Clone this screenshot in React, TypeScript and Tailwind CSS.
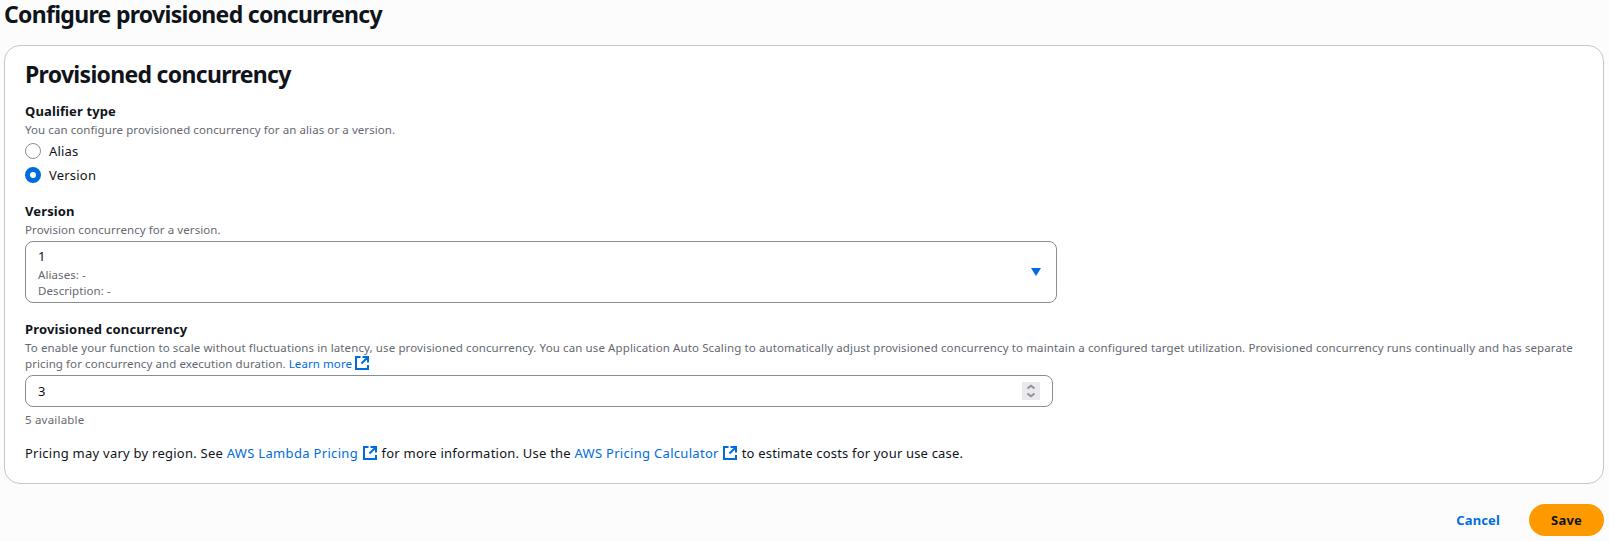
import React from "react";

const Ext = ({ className = "" }: { className?: string }) => (
  <svg className={"inline-block h-4 w-4 shrink-0 " + className} viewBox="0 0 16 16" fill="none" stroke="#006ce0" strokeWidth="2">
    <path d="M6.5 2H2v12h12v-4M7.5 8.5l6-6M8.5 2H14v5.5" />
  </svg>
);

const label = "block text-[13px] leading-5 font-bold tracking-[0.13px]";
const hint = "text-[11.5px] leading-4 text-[#656871] tracking-[0.08px]";

export default function App() {
  return (
    <div className="h-[541px] overflow-hidden bg-[#fcfcfd] pl-1 pr-[5px] font-['Noto_Sans',sans-serif] text-[13px] leading-5 tracking-[0.2px] text-[#0f141a]">
      <h1 className="h-[45px] text-[23px] leading-[29px] font-bold tracking-[-0.7px]">Configure provisioned concurrency</h1>
      <section className="h-[439px] rounded-2xl border border-[#c6c6cd] bg-white px-5 pt-[14px]">
        <h2 className="text-[23px] leading-[29px] font-bold tracking-[-0.7px]">Provisioned concurrency</h2>
        <div className="mt-3"><span className={label}>Qualifier type</span></div>
        <p className={hint + " mt-px"}><span>You can configure provisioned concurrency for an alias or a version.</span></p>
        <div className="mt-[3px] flex flex-col gap-1">
          <label className="flex items-center gap-2">
            <span className="h-4 w-4 rounded-full border border-[#8c8c94]" />
            <span>Alias</span>
          </label>
          <label className="flex items-center gap-2">
            <span className="h-4 w-4 rounded-full border-5 border-[#006ce0]" />
            <span>Version</span>
          </label>
        </div>
        <div className="mt-4"><span className={label}>Version</span></div>
        <p className={hint + " mt-px"}><span>Provision concurrency for a version.</span></p>
        <div className="mt-[3px] flex h-[62px] w-[1032px] items-center justify-between rounded-lg border border-[#8c8c94] pr-[15px] pl-3">
          <div className="pt-px">
            <div className="-mt-px mb-px"><span>1</span></div>
            <div className={hint}>Aliases: -</div>
            <div className={hint}>Description: -</div>
          </div>
          <svg className="h-2 w-[10px]" viewBox="0 0 10 8" fill="#006ce0"><path d="M0 0h10L5 8z" /></svg>
        </div>
        <div className="mt-4"><span className={label}>Provisioned concurrency</span></div>
        <p className={hint + " mt-px"}><span className="tracking-[0.115px] whitespace-nowrap">To enable your function to scale without fluctuations in latency, use provisioned concurrency. You can use Application Auto Scaling to automatically adjust provisioned concurrency to maintain a configured target utilization. Provisioned concurrency runs continually and has separate</span></p>
        <p className={hint + " flex"}><span>pricing for concurrency and execution duration.</span><a className="ml-[3px] text-[#006ce0]">Learn more</a><Ext className="-mt-px ml-[2px]" /></p>
        <div className="mt-[3px] flex h-8 w-[1028px] items-center justify-between rounded-lg border border-[#8c8c94] pr-3 pl-3">
          <span>3</span>
          <span className="flex h-[18px] w-[18px] items-center justify-center bg-[#e9e9ed]">
            <svg className="h-[18px] w-[18px]" viewBox="0 0 18 18" fill="none" stroke="#8f8f9d" strokeWidth="2"><path d="M5.5 6.5L9 3.8l3.5 2.7M5.5 11.5L9 14.2l3.5-2.7" /></svg>
          </span>
        </div>
        <p className={hint + " mt-[5px]"}><span className="tracking-[0.2px]">5 available</span></p>
        <p className="mt-[15px] flex items-center">
          <span className="tracking-[0.25px]">Pricing may vary by region. See</span>
          <a className="ml-[3.5px] tracking-[0.32px] text-[#006ce0]">AWS Lambda Pricing</a><Ext className="ml-1" />
          <span className="ml-[3.5px] tracking-[0.23px]">for more information. Use the</span>
          <a className="ml-[3.5px] tracking-[0.3px] text-[#006ce0]">AWS Pricing Calculator</a><Ext className="ml-[3.5px]" />
          <span className="ml-[3.5px] tracking-[0.18px]">to estimate costs for your use case.</span>
        </p>
      </section>
      <div className="mt-5 flex h-8 justify-end gap-2">
        <button className="px-[21px] font-bold tracking-[0.12px] text-[#006ce0]">Cancel</button>
        <button className="w-[75px] rounded-full bg-[#ff9900] font-bold">Save</button>
      </div>
    </div>
  );
}
